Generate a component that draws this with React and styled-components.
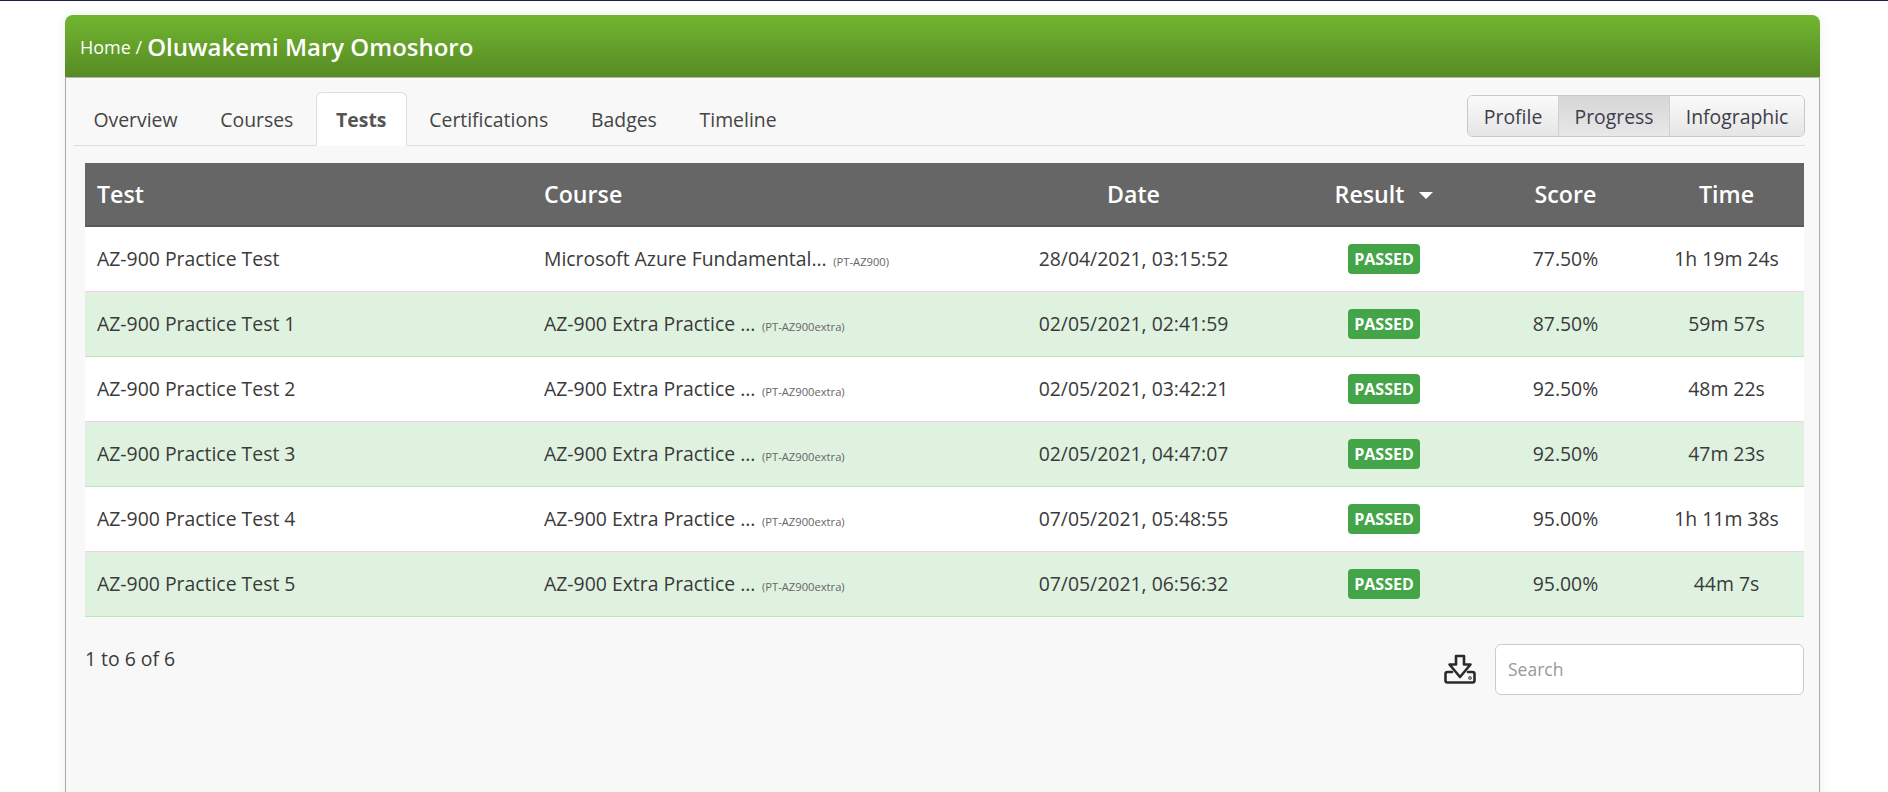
import React from "react";
import styled, { createGlobalStyle } from "styled-components";

const Global = createGlobalStyle`
  html, body { margin: 0; padding: 0; background: #fff; height: 100%; overflow: hidden; }
  body { font-family: "Open Sans", "Liberation Sans", sans-serif; color: #333; font-size: 16px; }
  * { box-sizing: border-box; }
`;
const TopLine = styled.div`height: 1px; background: #1e1e46;`;
const Page = styled.div`padding: 14px 68px 0 65px; height: 791px; overflow: hidden;`;
const Panel = styled.section`
  height: 900px; border-radius: 8px 8px 0 0; background: #f8f8f8;
  box-shadow: 0 0 12px rgba(0,0,0,.08);
`;
const Header = styled.header`
  height: 63px; padding: 0 15px; display: flex; align-items: center; color: #fff;
  background: linear-gradient(#70b62f, #588a25); border-radius: 8px 8px 0 0;
  border-bottom: 1px solid #b5b5b5;
`;
const Crumb = styled.span`font-size: 18px; margin-right: 5px; padding-top: 2px;`;
const Title = styled.strong`font-size: 24px; font-weight: 600;`;
const Body = styled.div`
  border-left: 1px solid #aaa; border-right: 1px solid #aaa; height: 830px; padding: 0 14px 0 8px;
`;
const TabBar = styled.div`
  height: 68px; display: flex; justify-content: space-between; align-items: flex-end;
  border-bottom: 1px solid #ddd;
`;
const Tabs = styled.nav`display: flex; align-items: flex-end; margin: 0 0 -1px -1px;`;
const Tab = styled.a`
  height: 54px; padding: 2px 19.4px 0; margin-right: 2px;
  display: flex; align-items: center; font-size: 19.4px; line-height: 1;
  color: ${p => p.$active ? "#555" : "#444"}; font-weight: ${p => p.$active ? 700 : 400};
  background: ${p => p.$active ? "#fff" : "transparent"};
  border: 1px solid ${p => p.$active ? "#ddd" : "transparent"};
  border-bottom-color: ${p => p.$active ? "#fff" : "transparent"};
  border-radius: 6px 6px 0 0;
`;
const BtnGroup = styled.div`
  display: flex; height: 42px; margin: 0 0 8px 0; border: 1px solid #c8c8c8; border-radius: 6px; overflow: hidden;
`;
const Btn = styled.button`
  font: 19.4px "Open Sans", sans-serif; color: #3d3d4a; padding: 0 15.6px; border: 0;
  border-left: ${p => p.$first ? "0" : "1px solid #d0d0d0"};
  background: ${p => p.$active ? "linear-gradient(#d6d6d6, #e8e8e8)" : "linear-gradient(#fafafa, #e6e6e6)"};
`;
const Table = styled.table`
  width: 1719px; margin: 17px 0 0 11px; border-collapse: collapse; table-layout: fixed; font-size: 19.4px;
`;
const Th = styled.th`
  height: 63px; padding: 0 11px 0 ${p => p.$left ? 12 : 11}px; background: #666; color: #fff; font-size: 23.2px; font-weight: 600;
  border-bottom: 2px solid #595959; text-align: ${p => p.$left ? "left" : "center"};
`;
const Caret = styled.span`
  display: inline-block; margin-left: 15px; vertical-align: 4px;
  border: 7.5px solid transparent; border-top-color: #fff; border-bottom: 0;
`;
const Tr = styled.tr`background: ${p => p.$alt ? "#dff2e0" : "#fff"};`;
const Td = styled.td`
  height: 65px; padding: 0 11px 0 ${p => p.$left ? 12 : 11}px; color: #3a3a3a; white-space: nowrap; overflow: hidden;
  text-align: ${p => p.$left ? "left" : "center"};
  border-bottom: 1px solid ${p => p.$alt ? "#b9e6bc" : "#f4d0f0"};
`;
const Code = styled.small`font-size: 11.2px; color: #666; margin-left: 1.5px;`;
const Badge = styled.span`
  display: inline-block; background: #43a547; color: #fff; font-size: 16px; font-weight: 700;
  height: 30px; line-height: 31px; border-radius: 4px; width: 72px;
`;
const Footer = styled.div`display: flex; justify-content: space-between; margin: 27px 1px 0 11px;`;
const Count = styled.div`font-size: 19.4px; color: #3a3a3a; margin-top: 1px;`;
const Tools = styled.div`display: flex; align-items: center; gap: 17px;`;
const Search = styled.input`
  width: 309px; height: 51px; border: 1px solid #ccc; border-radius: 6px; padding: 0 12px; background: #fff;
  font: 17.5px "Open Sans", sans-serif;
  &::placeholder { color: #999; }
`;

const rows = [
  ["AZ-900 Practice Test", "Microsoft Azure Fundamental...", "(PT-AZ900)", "28/04/2021, 03:15:52", "77.50%", "1h 19m 24s"],
  ["AZ-900 Practice Test 1", "AZ-900 Extra Practice ...", "(PT-AZ900extra)", "02/05/2021, 02:41:59", "87.50%", "59m 57s"],
  ["AZ-900 Practice Test 2", "AZ-900 Extra Practice ...", "(PT-AZ900extra)", "02/05/2021, 03:42:21", "92.50%", "48m 22s"],
  ["AZ-900 Practice Test 3", "AZ-900 Extra Practice ...", "(PT-AZ900extra)", "02/05/2021, 04:47:07", "92.50%", "47m 23s"],
  ["AZ-900 Practice Test 4", "AZ-900 Extra Practice ...", "(PT-AZ900extra)", "07/05/2021, 05:48:55", "95.00%", "1h 11m 38s"],
  ["AZ-900 Practice Test 5", "AZ-900 Extra Practice ...", "(PT-AZ900extra)", "07/05/2021, 06:56:32", "95.00%", "44m 7s"],
];

const DownloadIcon = () => (
  <svg width="34" height="30" viewBox="0 0 34 30" fill="none" stroke="#2b2b2b" strokeWidth="2.6" strokeLinejoin="round" strokeLinecap="round">
    <path d="M12 2h8v8.5h6.5L16 23 5.5 10.5H12z" />
    <path d="M8 18H3.5a2 2 0 0 0-2 2v6.5a2 2 0 0 0 2 2h25a2 2 0 0 0 2-2V20a2 2 0 0 0-2-2H24" />
    <circle cx="26" cy="24" r=".5" />
  </svg>
);

export default function App() {
  return (
    <>
      <Global />
      <TopLine />
      <Page>
        <Panel>
          <Header><Crumb>Home /</Crumb><Title>Oluwakemi Mary Omoshoro</Title></Header>
          <Body>
            <TabBar>
              <Tabs>
                <Tab>Overview</Tab>
                <Tab>Courses</Tab>
                <Tab $active>Tests</Tab>
                <Tab>Certifications</Tab>
                <Tab>Badges</Tab>
                <Tab>Timeline</Tab>
              </Tabs>
              <BtnGroup>
                <Btn $first>Profile</Btn>
                <Btn $active>Progress</Btn>
                <Btn>Infographic</Btn>
              </BtnGroup>
            </TabBar>
            <Table>
              <colgroup>
                <col width="447" /><col width="449" /><col width="305" /><col width="196" /><col width="167" /><col width="155" />
              </colgroup>
              <thead>
                <tr>
                  <Th $left>Test</Th><Th $left>Course</Th><Th>Date</Th>
                  <Th>Result<Caret /></Th><Th>Score</Th><Th>Time</Th>
                </tr>
              </thead>
              <tbody>
                {rows.map((r, i) => {
                  const alt = i % 2 === 1;
                  return (
                    <Tr key={i} $alt={alt}>
                      <Td $left $alt={alt}>{r[0]}</Td>
                      <Td $left $alt={alt}>{r[1]} <Code>{r[2]}</Code></Td>
                      <Td $alt={alt}>{r[3]}</Td>
                      <Td $alt={alt}><Badge>PASSED</Badge></Td>
                      <Td $alt={alt}>{r[4]}</Td>
                      <Td $alt={alt}>{r[5]}</Td>
                    </Tr>
                  );
                })}
              </tbody>
            </Table>
            <Footer>
              <Count>1 to 6 of 6</Count>
              <Tools><DownloadIcon /><Search placeholder="Search" /></Tools>
            </Footer>
          </Body>
        </Panel>
      </Page>
    </>
  );
}
